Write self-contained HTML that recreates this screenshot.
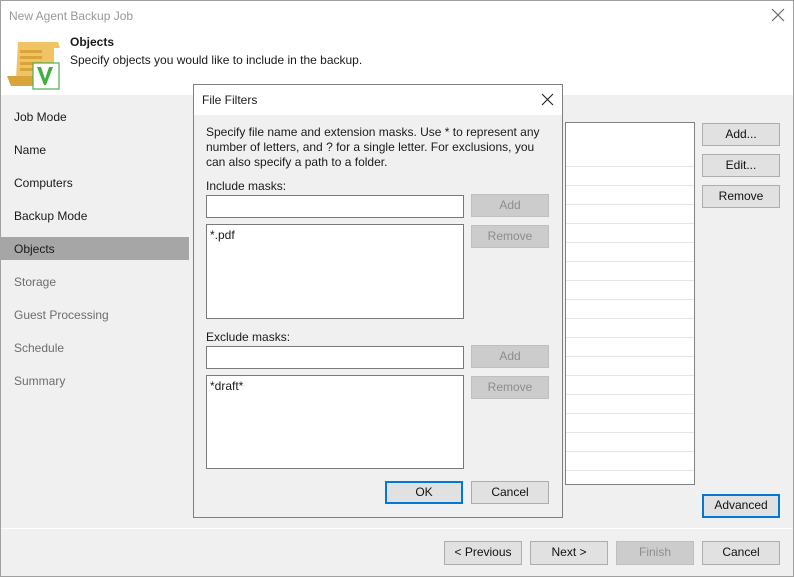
<!DOCTYPE html>
<html><head><style>
*{margin:0;padding:0;box-sizing:border-box}
body{width:794px;height:577px;position:relative;overflow:hidden;font-family:"Liberation Sans",sans-serif;font-size:12px;color:#1a1a1a;background:#f0f0f0}
.a{position:absolute}
.btn{position:absolute;background:#e1e1e1;border:1px solid #adadad;text-align:center;line-height:20px;font-size:12px;color:#111}
.dis{background:#cccccc;border-color:#bfbfbf;color:#8d8d8d}
.blue{border:2px solid #0078d7;line-height:18px}
.box{position:absolute;background:#fff;border:1px solid #7a7a7a}
.nav{position:absolute;left:14px;font-size:12px}
</style></head><body>
<div class="a" style="left:0;top:0;width:794px;height:577px;border:1px solid #a0a0a0"></div>
<div class="a" style="left:1px;top:1px;width:792px;height:94px;background:#fff"></div>
<div class="a" style="left:9px;top:9px;color:#999;font-size:12px">New Agent Backup Job</div>
<svg class="a" style="left:771px;top:8px" width="14" height="14"><path d="M1 1L13 13M13 1L1 13" stroke="#666" stroke-width="1.2"/></svg>
<svg class="a" style="left:6px;top:38px" width="56" height="52">
<path d="M12 4h40l2 6h-6v30H10z" fill="#f0c464"/>
<rect x="14" y="12" width="22" height="3" fill="#d9a43a"/><rect x="14" y="18" width="22" height="3" fill="#d9a43a"/><rect x="14" y="24" width="22" height="3" fill="#d9a43a"/><rect x="14" y="30" width="16" height="3" fill="#d9a43a"/>
<path d="M1 38h28v10H5z" fill="#d9a43a"/>
<rect x="27" y="25" width="26" height="26" fill="#fff" stroke="#4cb04c" stroke-width="1.2"/>
<path d="M31 29l7 18h2l7-18h-4l-4 12-4-12z" fill="#3fb03f"/>
</svg>
<div class="a" style="left:70px;top:35px;font-weight:bold;font-size:12px">Objects</div>
<div class="a" style="left:70px;top:53px">Specify objects you would like to include in the backup.</div>
<div class="a" style="left:0;top:237px;width:189px;height:23px;background:#a6a6a6"></div>
<div class="nav" style="top:110px">Job Mode</div>
<div class="nav" style="top:143px">Name</div>
<div class="nav" style="top:176px">Computers</div>
<div class="nav" style="top:209px">Backup Mode</div>
<div class="nav" style="top:242px">Objects</div>
<div class="nav" style="top:275px;color:#6d6d6d">Storage</div>
<div class="nav" style="top:308px;color:#6d6d6d">Guest Processing</div>
<div class="nav" style="top:341px;color:#6d6d6d">Schedule</div>
<div class="nav" style="top:374px;color:#6d6d6d">Summary</div>
<div class="box" style="left:565px;top:122px;width:130px;height:363px;border-color:#828282"></div>
<div class="a" style="left:566px;top:166px;width:128px;height:307px;background:repeating-linear-gradient(to bottom,#e6e6e6 0,#e6e6e6 1px,transparent 1px,transparent 19px)"></div>
<div class="btn" style="left:702px;top:123px;width:78px;height:23px">Add...</div>
<div class="btn" style="left:702px;top:154px;width:78px;height:23px">Edit...</div>
<div class="btn" style="left:702px;top:185px;width:78px;height:23px">Remove</div>
<div class="btn blue" style="left:702px;top:494px;width:78px;height:24px">Advanced</div>
<div class="a" style="left:1px;top:528px;width:792px;height:1px;background:#fff"></div>
<div class="btn" style="left:444px;top:541px;width:78px;height:24px">&lt; Previous</div>
<div class="btn" style="left:530px;top:541px;width:78px;height:24px">Next &gt;</div>
<div class="btn dis" style="left:616px;top:541px;width:78px;height:24px">Finish</div>
<div class="btn" style="left:702px;top:541px;width:78px;height:24px">Cancel</div>
<!-- dialog -->
<div class="a" style="left:193px;top:84px;width:370px;height:434px;background:#f0f0f0;border:1px solid #7f7f7f"></div>
<div class="a" style="left:194px;top:85px;width:368px;height:30px;background:#fff"></div>
<div class="a" style="left:202px;top:93px">File Filters</div>
<svg class="a" style="left:541px;top:93px" width="13" height="13"><path d="M1 1L12 12M12 1L1 12" stroke="#222" stroke-width="1.1"/></svg>
<div class="a" style="left:206px;top:125px;line-height:15px;width:350px">Specify file name and extension masks. Use * to represent any<br>number of letters, and ? for a single letter. For exclusions, you<br>can also specify a path to a folder.</div>
<div class="a" style="left:206px;top:179px">Include masks:</div>
<div class="box" style="left:206px;top:195px;width:258px;height:23px"></div>
<div class="btn dis" style="left:471px;top:194px;width:78px;height:23px">Add</div>
<div class="box" style="left:206px;top:224px;width:258px;height:95px;padding:3px 3px">*.pdf</div>
<div class="btn dis" style="left:471px;top:225px;width:78px;height:23px">Remove</div>
<div class="a" style="left:206px;top:330px">Exclude masks:</div>
<div class="box" style="left:206px;top:346px;width:258px;height:23px"></div>
<div class="btn dis" style="left:471px;top:345px;width:78px;height:23px">Add</div>
<div class="box" style="left:206px;top:375px;width:258px;height:94px;padding:3px 3px">*draft*</div>
<div class="btn dis" style="left:471px;top:376px;width:78px;height:23px">Remove</div>
<div class="btn blue" style="left:385px;top:481px;width:78px;height:23px">OK</div>
<div class="btn" style="left:471px;top:481px;width:78px;height:23px">Cancel</div>
</body></html>
